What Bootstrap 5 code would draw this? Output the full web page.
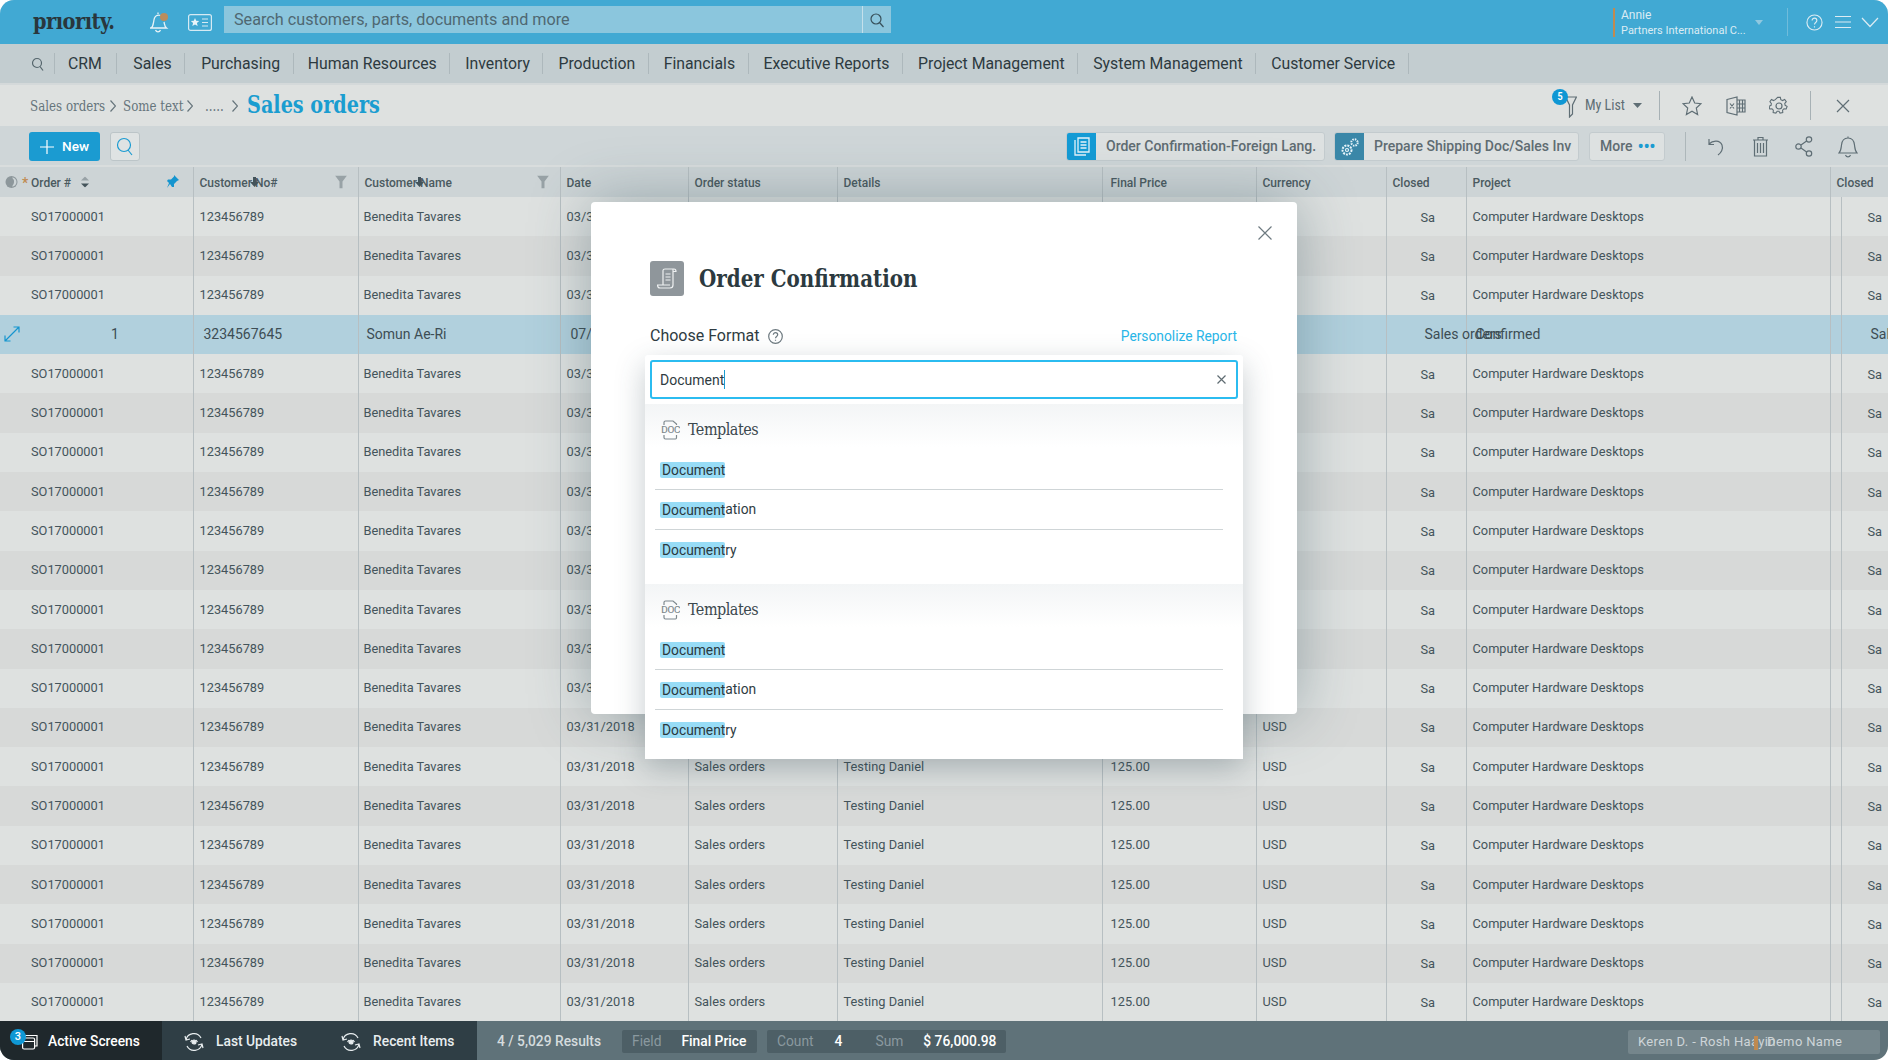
<!DOCTYPE html>
<html lang="en">
<head>
    <meta charset="UTF-8">
    <title>Sales orders - Priority</title>
    <meta name="viewport" content="width=device-width, initial-scale=1">
    <link href="https://cdn.jsdelivr.net/npm/bootstrap@5.3.3/dist/css/bootstrap.min.css" rel="stylesheet">
    <style>
        html, body { height: 100%; background: #fff; overflow: hidden; }
        body { font-family: Roboto, "Liberation Sans", sans-serif; color: #44545b; }
        svg { display: block; fill: none; stroke: currentColor; stroke-width: 1.2; flex: none; }
        .slab { font-family: "DejaVu Serif Condensed", "DejaVu Serif", serif; font-stretch: condensed; }
        .squeezed { display: inline-block; transform-origin: left center; white-space: nowrap; }
        .app-frame { position: relative; width: 1888px; height: 1060px; border-radius: 14px; overflow: hidden; display: flex; flex-direction: column; background: #dee1e0; }

        .top-bar { height: 44px; background: #41a9d3; color: #dcecf3; }
        .logo-text { margin-left: 33px; width: 116px; color: #29373d; font-size: 21.5px; font-weight: 700; letter-spacing: -.5px; line-height: 44px; }
        .bar-search { width: 667px; height: 27px; margin-left: 12px; margin-top: -5px; background: #8bc6dd; }
        .bar-search span { flex: 1; padding-left: 10px; font-size: 16.2px; line-height: 27px; color: #4f6872; }
        .bar-search div { width: 29px; height: 27px; border-left: 1px solid #c4e0eb; color: #38505a; }
        .user-box { height: 29px; border-left: 2px solid #c08a50; padding-left: 6px; width: 171px; line-height: 14px; }
        .user-box b { display: block; font-weight: 400; font-size: 12px; }
        .user-box small { font-size: 11px; white-space: nowrap; }
        .thin-sep { width: 1px; background: #6fbcdb; height: 28px; }

        .main-menu { height: 41px; background: #c3cdd0; border-bottom: 2px solid #d4d9da; padding: 0; color: #2d3a40; }
        .main-menu .menu-find { width: 55px; color: #56666d; }
        .menu-item { font-size: 15.8px; line-height: 21px; padding: 0 12.5px 0 15px; border-right: 1px solid #adb8bc; color: #2d3a40; text-decoration: none; white-space: nowrap; }
        .menu-find { border-right: 1px solid #adb8bc; height: 21px; }

        .crumb-band { height: 41px; background: #dee1e0; padding: 0 0 0 30px; }
        .crumb-link { color: #66757c; font-size: 14.5px; transform: scaleX(.91); }
        .crumb-arrow { color: #66757c; }
        .crumb-title { font-size: 24px; color: #1a9dd0; font-weight: 700; line-height: 41px; transform: scaleX(.89); margin-top: -3px; }
        .band-icons { color: #5f6e75; }
        .band-sep { width: 1px; height: 29px; background: #a7b1b5; }
        .count-dot { position: absolute; left: -13px; top: -5px; width: 16px; height: 16px; padding: 0; border-radius: 50%; background: #0f97d4; color: #fff; font-size: 11px; line-height: 16px; text-align: center; font-weight: 500; }

        .tool-band { height: 41px; background: #cfd6d8; border-bottom: 2px solid #d9dddd; padding: 2px 0 0 29px; }
        .btn-new { height: 29px; width: 71px; background: #1b9bd1; color: #fff; font-size: 13.6px; font-weight: 500; padding: 0; border: 0; border-radius: 3px; }
        .btn-find { height: 29px; width: 30px; margin-left: 10px; background: #dfe3e3; border: 1px solid #bcc5c8; border-radius: 3px; padding: 0; color: #1b9bd1; }
        .btn-doc { height: 29px; background: #dde1e1; border: 1px solid #c3cbce; border-radius: 3px; padding: 0; font-size: 14px; font-weight: 500; color: #5f6c72; white-space: nowrap; }
        .btn-doc .doc-square { width: 29px; height: 27px; background: #149bd5; color: #e6f4fa; border-radius: 2px 0 0 2px; margin-right: 10px; }
        .btn-doc .doc-square.muted-sq { background: #3a87a8; }
        .more-dots { color: #1b9bd1; font-size: 18px; letter-spacing: -.5px; line-height: 10px; }

        .grid-wrap { flex: 1; overflow: hidden; }
        .grid-tbl { width: 1888px; table-layout: fixed; margin: 0; color: #44545b; font-size: 12.8px; }
        .grid-tbl > thead > tr > th, .grid-tbl > tbody > tr > td { border: 0; border-left: 1px solid #b7bfc2; padding: 0 0 1px 6px; vertical-align: middle; white-space: nowrap; color: #44545b; }
        .grid-tbl > thead > tr > th:first-child, .grid-tbl > tbody > tr > td:first-child { border-left: 0; padding-left: 31px; }
        .grid-tbl > tbody > tr > td:nth-child(3) { padding-left: 5px; }
        .grid-tbl thead tr { height: 30px; --bs-table-bg: #cdd4d6; }
        .grid-tbl > thead > tr > th { font-size: 12px; font-weight: 500; position: relative; color: #4b5a60; padding-top: 2px; padding-bottom: 0; }
        .grid-tbl tbody tr { height: 39.3px; --bs-table-bg: #dee1e0; }
        .grid-tbl tbody tr:nth-child(even) { --bs-table-bg: #d7d9d8; }
        .grid-tbl > tbody > tr > td.col-price { padding-left: 8px; }
        .grid-tbl > tbody > tr > td.col-closed { padding-left: 34px; padding-top: 1px; padding-bottom: 0; }
        .grid-tbl > tbody > tr > td.col-last { padding-left: 26px; padding-top: 1px; padding-bottom: 0; }
        .grid-tbl > tbody > tr.row-picked > td { font-size: 14px; padding-left: 10px; padding-top: 0; --bs-table-bg: #b1d0dd; color: #3d4d54; }
        .grid-tbl > tbody > tr.row-picked > td:first-child { padding-left: 111px; position: relative; }
        .grid-tbl > tbody > tr.row-picked > td:nth-child(3) { padding-left: 8px; }
        .grid-tbl > tbody > tr.row-picked > td.col-closed { padding-left: 38px; }
        .grid-tbl > tbody > tr.row-picked > td.col-project { padding-left: 9px; }
        .grid-tbl > tbody > tr.row-picked > td.col-last { padding-left: 29px; }
        .head-mark { position: absolute; top: 50%; transform: translateY(-50%); }

        .status-bar { height: 39px; background: #5f7279; color: #d5dcde; font-size: 13.8px; font-weight: 500; }
        .status-active { width: 162px; background: #1f282c; color: #fff; position: relative; height: 100%; padding: 2px 0 0 22px; }
        .status-recent { width: 315px; background: #2f3e45; color: #e8edef; height: 100%; padding: 2px 0 0 22px; }
        .status-pill { height: 23px; background: #4d5f66; border-radius: 2px; padding: 0 10px; white-space: nowrap; margin-top: 2px; }
        .status-pill i { font-style: normal; color: #8a999f; font-weight: 400; }
        .status-pill b { font-weight: 500; color: #fff; }
        .status-user { position: relative; width: 252px; height: 24px; margin: 2px 8px 0 auto; background: #75868c; border-radius: 2px; font-size: 13px; font-weight: 400; color: #ced5d8; letter-spacing: .35px; padding-left: 10px; line-height: 24px; white-space: nowrap; }
        .status-user i { position: absolute; left: 126px; top: 6px; width: 4px; height: 14px; background: #c08a50; z-index: 1; }
        .status-user span { position: absolute; left: 139px; top: 0; }

        .dialog-box { position: absolute; left: 591px; top: 202px; width: 706px; height: 512px; border: 0; border-radius: 4px; background: #fff; box-shadow: 0 0 60px rgba(55, 85, 95, .4); display: block; }
        .dialog-close { position: absolute; right: 25px; top: 24px; color: #6e7a80; }
        .dialog-head { position: absolute; left: 59px; top: 58px; }
        .dialog-badge { width: 34px; height: 35px; background: #8f969b; border-radius: 3px; color: #eef0f1; }
        .dialog-title { font-size: 24px; font-weight: 700; color: #2c3a40; margin: 1px 0 0 15px; transform: scaleX(.92); }
        .format-line { position: absolute; left: 59px; right: 60px; top: 124px; height: 20px; }
        .format-line b { font-weight: 400; font-size: 16px; color: #2f3c42; }
        .format-line a { color: #29b6e8; font-size: 13.8px; text-decoration: none; }
        .format-help { color: #6e7a80; margin-left: 9px; }

        .picker-panel { position: absolute; left: 645px; top: 355px; width: 598px; height: 404px; background: #fff; border-radius: 3px; padding-top: 5px; box-shadow: 0 10px 30px rgba(45, 70, 80, .28); }
        .picker-input { position: relative; margin: 0 5px; }
        .picker-input .form-control { height: 39px; border: 2px solid #2bbcf0; border-radius: 3px; box-shadow: none; padding: 0 8px; font-size: 14px; color: #2f3c42; }
        .picker-caret { position: absolute; left: 74px; top: 10px; width: 1px; height: 19px; background: #1a9dd0; }
        .picker-clear { position: absolute; right: 12px; top: 15px; color: #5f6c72; }
        .picker-group { height: 180px; margin-top: 5px; background: linear-gradient(#f3f5f6, #fff 43px); }
        .picker-group + .picker-group { margin-top: 0; height: 175px; }
        .picker-title { height: 46px; padding: 5px 0 0 16px; font-size: 16px; letter-spacing: -.5px; color: #3b484e; }
        .picker-title svg { margin-right: 8px; color: #7d888d; }
        .picker-group .list-group-item { height: 40px; margin: 0 20px 0 10px; padding: 0 0 0 5px; border: 0; border-bottom: 1px solid #cfd5d7; border-radius: 0; background: transparent; font-size: 13.8px; color: #2f3c42; display: flex; align-items: center; }
        .picker-group .list-group-item:last-child { border-bottom: 0; }
        .hit-mark { background: #98dcf6; border-radius: 2px; padding-left: 2px; height: 16px; line-height: 16px; color: #2a383e; }
    </style>
</head>
<body>
    <div class="app-frame">

        <nav class="top-bar d-flex align-items-center">
            <div class="logo-text slab">prıorıty.</div>
            <svg width="24" height="22" viewBox="0 0 24 22" style="margin-left:-1px"><path d="M3 17c3-2 2-6 3.500-10 1-2.500 4-3.500 6-2.500M2 17h16.500c-2-1.500-2-4-2.500-6M7.500 19c1 2.500 4 2.500 5 0M10 3V1.500" stroke="#e6f2f7" stroke-width="1.300"/><circle cx="16" cy="6" r="4" fill="#b98d5c" stroke="none"/></svg>
            <svg class="ms-3" width="24" height="17" viewBox="0 0 24 17"><rect x=".6" y=".6" width="22.800" height="15.800" rx="2" stroke="#d6eaf3"/><path d="M7 4l1.200 2.800 3 .2-2.300 2 .8 3-2.700-1.600L4.300 12l.8-3-2.300-2 3-.2z" fill="#e8f4f9" stroke="none"/><path d="M14 5h6M14 8.500h6M14 12h6" stroke="#d6eaf3"/></svg>
            <div class="bar-search d-flex align-items-center">
                <span>Search customers, parts, documents and more</span>
                <div class="d-flex align-items-center justify-content-center"><svg width="16" height="16" viewBox="0 0 16 16"><circle cx="7" cy="7" r="5"/><path d="M10.500 10.500l4 4.500"/></svg></div>
            </div>
            <div class="user-box" style="margin-left:722px">
                <b>Annie</b>
                <small>Partners International C...</small>
            </div>
            <svg width="8" height="5" viewBox="0 0 8 5" class="me-3" style="margin-left:-29px"><path d="M0 0h8L4 5z" fill="#8fc8e0" stroke="none"/></svg>
            <div class="thin-sep" style="margin-left:8px"></div>
            <svg style="margin-left:17.500px" width="17" height="17" viewBox="0 0 18 18"><circle cx="9" cy="9" r="8"/><path d="M6.500 7c0-3.500 5-3.500 5 0 0 2-2.500 2-2.500 4M9 13v1.200"/></svg>
            <svg style="margin-left:12px" width="16" height="14" viewBox="0 0 16 14" stroke-width="1.500"><path d="M0 1.500h16M0 7h16M0 12.500h16"/></svg>
            <svg style="margin-left:10px" width="18" height="11" viewBox="0 0 18 11" stroke-width="1.500"><path d="M1 1l8 8.500L17 1"/></svg>
        </nav>

        <nav class="main-menu navbar navbar-expand justify-content-start flex-nowrap">
            <div class="menu-find d-flex align-items-center justify-content-end pe-2"><svg style="margin-right:2px" width="13" height="14" viewBox="0 0 13 14"><circle cx="6" cy="6" r="4.500"/><path d="M9 9.500l3 4"/></svg></div>
            <a class="menu-item" href="#" style="padding-left:13px;padding-right:14.500px">CRM</a>
            <a class="menu-item" href="#" style="padding-left:16px">Sales</a>
            <a class="menu-item" href="#" style="padding-left:16px">Purchasing</a>
            <a class="menu-item" href="#" style="padding-left:14px">Human Resources</a>
            <a class="menu-item" href="#">Inventory</a>
            <a class="menu-item" href="#">Production</a>
            <a class="menu-item" href="#">Financials</a>
            <a class="menu-item" href="#">Executive Reports</a>
            <a class="menu-item" href="#">Project Management</a>
            <a class="menu-item" href="#">System Management</a>
            <a class="menu-item" href="#">Customer Service</a>
        </nav>

        <div class="crumb-band d-flex align-items-center slab">
            <div style="width:80px"><span class="crumb-link squeezed">Sales orders</span></div>
            <svg class="crumb-arrow" width="6" height="12" viewBox="0 0 6 12"><path d="M.5.500l5 5.500-5 5.500"/></svg>
            <div style="width:64px;margin-left:7px"><span class="crumb-link squeezed">Some text</span></div>
            <svg class="crumb-arrow" width="6" height="12" viewBox="0 0 6 12"><path d="M.5.500l5 5.500-5 5.500"/></svg>
            <div style="width:27px;margin-left:12px"><span class="crumb-link squeezed">.....</span></div>
            <svg class="crumb-arrow" width="6" height="12" viewBox="0 0 6 12"><path d="M.5.500l5 5.500-5 5.500"/></svg>
            <div style="width:140px;margin-left:9px"><span class="crumb-title squeezed">Sales orders</span></div>
            <div class="band-icons ms-auto d-flex align-items-center" style="font-family:Roboto,sans-serif">
                <div class="position-relative me-2">
                    <span class="count-dot">5</span>
                    <svg width="12" height="24" viewBox="0 0 12 24"><path d="M.6 3h10.800L7.500 11v9l-3 3V11z"/></svg>
                </div>
                <span style="font-size:14px">My List</span>
                <svg class="ms-2" width="9" height="5" viewBox="0 0 9 5"><path d="M0 0h9L4.500 5z" fill="currentColor" stroke="none"/></svg>
                <div class="band-sep" style="margin-left:17px"></div>
                <svg style="margin-left:22px" width="20" height="20" viewBox="0 0 20 20"><path d="M10 1l2.700 6 6.300.7-4.700 4.300 1.300 6.500L10 15.200 4.400 18.500 5.700 12 1 7.700 7.300 7z"/></svg>
                <svg style="margin-left:24px" width="20" height="20" viewBox="0 0 20 20"><path d="M1 3.500L11 1v18L1 16.500zM11 4h8v12h-8M13.500 4v12M16.500 4v12M11 8h8M11 12h8M4 7.500l4 5M8 7.500l-4 5"/></svg>
                <svg style="margin-left:23px" width="20" height="20" viewBox="0 0 20 20"><path d="M8.500 1h3l.5 2.500 2 1 2.300-1.200 1.800 2.400-1.700 2 .4 2.100 2.200 1.200-1 2.900-2.500-.3-1.500 1.600.2 2.600-3 .7-1.200-2.200h-2L6.500 18.500l-3-.7.2-2.600-1.500-1.600-2.500.3L-1 11l2.200-1.200.3-2-1.600-2 1.700-2.500 2.300 1.200 2-1z" transform="translate(1 .5) scale(.9)"/><circle cx="10" cy="10" r="3"/></svg>
                <div class="band-sep" style="margin-left:21px"></div>
                <svg style="margin-left:25px" width="14" height="14" viewBox="0 0 14 14"><path d="M1 1l12 12M13 1L1 13"/></svg>
                <div style="width:38px"></div>
            </div>
        </div>

        <div class="tool-band d-flex align-items-center">
            <button type="button" class="btn btn-new d-flex align-items-center justify-content-center gap-2">
                <svg width="14" height="14" viewBox="0 0 14 14" stroke-width="1.300"><path d="M7 0v14M0 7h14"/></svg>New
            </button>
            <button type="button" class="btn btn-find d-flex align-items-center justify-content-center">
                <svg width="18" height="19" viewBox="0 0 18 19" stroke-width="2"><circle cx="8" cy="8" r="6.500"/><path d="M12 13l4 5"/></svg>
            </button>
            <button type="button" class="btn btn-doc d-flex align-items-center ms-auto" style="width:259px">
                <span class="doc-square d-flex align-items-center justify-content-center"><svg width="16" height="19" viewBox="0 0 16 19"><path d="M1 3v15h11M4 1h11v14H4zM6.500 5h6M6.500 8h6M6.500 11h6" stroke-width="1.300"/></svg></span>Order Confirmation-Foreign Lang.
            </button>
            <button type="button" class="btn btn-doc d-flex align-items-center" style="width:245px;margin-left:9px">
                <span class="doc-square muted-sq d-flex align-items-center justify-content-center"><svg width="20" height="20" viewBox="0 0 20 20"><circle cx="7" cy="13" r="4.500" stroke-dasharray="2 1" stroke-width="2"/><circle cx="7" cy="13" r="1.500"/><circle cx="14.500" cy="5.500" r="3.200" stroke-dasharray="1.500 1" stroke-width="2"/></svg></span>Prepare Shipping Doc/Sales Inv
            </button>
            <button type="button" class="btn btn-doc d-flex align-items-center justify-content-between" style="width:76px;margin-left:10px;padding:0 9px 0 10px">
                More <span class="more-dots">•••</span>
            </button>
            <div class="band-sep" style="margin-left:20px;background:#adb7ba"></div>
            <div class="d-flex align-items-center band-icons">
                <svg style="margin-left:22px" width="18" height="20" viewBox="0 0 18 20"><path d="M1 7c4-4 11-4 13 1 1.500 4-1 8-4 10M1 2v5.500h5"/></svg>
                <svg style="margin-left:26px" width="17" height="21" viewBox="0 0 17 21"><path d="M1 4h15M6 4V1.500h5V4M2.500 4v16h12V4M5.500 7v10M8.500 7v10M11.500 7v10"/></svg>
                <svg style="margin-left:26px" width="18" height="21" viewBox="0 0 18 21"><circle cx="3.500" cy="10.500" r="2.700"/><circle cx="14" cy="3.500" r="2.700"/><circle cx="14" cy="17.500" r="2.700"/><path d="M6 9l5.600-4M6 12l5.600 4"/></svg>
                <svg style="margin-left:25px" width="20" height="22" viewBox="0 0 20 22"><path d="M1 17c2-2 2-4 2.500-8C4 4 7 2 10 2s6 2 6.500 7c.5 4 .5 6 2.500 8zM10 2V.5M7.500 19c1 2.500 4 2.500 5 0"/></svg>
                <div style="width:30px"></div>
            </div>
        </div>

        <div class="grid-wrap">
            <table class="table grid-tbl">
                <colgroup>
                    <col style="width:193px"><col style="width:165px"><col style="width:202px"><col style="width:128px"><col style="width:149px"><col style="width:265px"><col style="width:154px"><col style="width:130px"><col style="width:80px"><col style="width:364px"><col style="width:11px"><col style="width:47px">
                </colgroup>
                <thead>
                    <tr>
                        <th>
                            <svg class="head-mark" style="left:5px" width="13" height="13" viewBox="0 0 13 13"><circle cx="6.500" cy="6.500" r="6" fill="#8d979b" stroke="none"/><path d="M7 2a4.500 4.500 0 0 1 0 9 6 6 0 0 0 0-9z" fill="#cdd4d6" stroke="none"/></svg>
                            <span class="head-mark" style="left:22px;top:16px;color:#c08a50;font-size:14px">*</span>
                            Order #
                            <svg class="head-mark" style="left:81px" width="8" height="11" viewBox="0 0 8 11"><path d="M0 4l4-4 4 4z" fill="#98a2a6" stroke="none"/><path d="M0 7h8l-4 4z" fill="#44545b" stroke="none"/></svg>
                            <svg class="head-mark" style="left:166px;color:#1595cf" width="13" height="14" viewBox="0 0 13 14"><path d="M8 0l5 5-2 1-3 3 0 3-2 0-2-3-3 4 2-5-2-2 1-1.500 3 0 3-3z" fill="currentColor" stroke="none"/></svg>
                        </th>
                        <th>Customer No#
                            <svg class="head-mark" style="left:56px" width="9" height="10" viewBox="0 0 9 10"><path d="M0 5l4.500 5L9 5H6V0H3v5z" fill="#44545b" stroke="none"/></svg>
                            <svg class="head-mark" style="left:141px;top:15px" width="12" height="13" viewBox="0 0 12 13"><path d="M0 0h12L7.500 6v7h-3V6z" fill="#98a2a6" stroke="none"/></svg>
                        </th>
                        <th>Customer Name
                            <svg class="head-mark" style="left:56px" width="9" height="10" viewBox="0 0 9 10"><path d="M0 5l4.500 5L9 5H6V0H3v5z" fill="#44545b" stroke="none"/></svg>
                            <svg class="head-mark" style="left:178px;top:15px" width="12" height="13" viewBox="0 0 12 13"><path d="M0 0h12L7.500 6v7h-3V6z" fill="#98a2a6" stroke="none"/></svg>
                        </th>
                        <th>Date</th>
                        <th>Order status</th>
                        <th>Details</th>
                        <th style="padding-left:8px">Final Price</th>
                        <th>Currency</th>
                        <th>Closed</th>
                        <th>Project</th>
                        <th colspan="2">Closed</th>
                    </tr>
                </thead>
                <tbody id="orderRows"></tbody>
            </table>
        </div>

        <footer class="status-bar d-flex align-items-center">
            <div class="status-active d-flex align-items-center">
                <span class="count-dot" style="left:10px;top:8px;z-index:1">3</span>
                <svg width="16" height="16" viewBox="0 0 16 16"><rect x=".6" y="4" width="12" height="11" rx="1.500"/><path d="M3 4V1.500h12V12h-2M.6 7.500h12"/></svg>
                <span style="margin-left:10px">Active Screens</span>
            </div>
            <div class="status-recent d-flex align-items-center">
                <svg width="20" height="20" viewBox="0 0 20 20"><path d="M2 8a8 8 0 0 1 15-2M18 12a8 8 0 0 1-15 2M1 4l1 4 4-1M19 16l-1-4-4 1"/><circle cx="10" cy="10" r="2" fill="currentColor"/><path d="M6.500 10l1.500-2M13.500 10L12 8"/></svg>
                <span style="margin-left:12px">Last Updates</span>
                <svg style="margin-left:44px" width="20" height="20" viewBox="0 0 20 20"><path d="M2 8a8 8 0 0 1 15-2M18 12a8 8 0 0 1-15 2M1 4l1 4 4-1M19 16l-1-4-4 1"/><circle cx="10" cy="10" r="2" fill="currentColor"/><path d="M6.500 10l1.500-2M13.500 10L12 8"/></svg>
                <span style="margin-left:12px">Recent Items</span>
            </div>
            <span style="margin:2px 0 0 20px;width:125px;white-space:nowrap">4 / 5,029 Results</span>
            <div class="status-pill d-flex align-items-center" style="width:135px"><i>Field</i><b style="margin-left:20px">Final Price</b></div>
            <div class="status-pill d-flex align-items-center" style="width:239px;margin-left:10px">
                <i>Count</i><b style="margin-left:21px">4</b>
                <span style="width:1px;height:16px;background:#5f7279;margin-left:19px"></span>
                <i style="margin-left:14px">Sum</i><b style="margin-left:20px">$ 76,000.98</b>
            </div>
            <div class="status-user">Keren D. - Rosh Haayin<i></i><span>Demo Name</span></div>
        </footer>

        <div class="modal-content dialog-box">
            <svg class="dialog-close" width="14" height="14" viewBox="0 0 14 14"><path d="M.5.500l13 13M13.500.500l-13 13"/></svg>
            <div class="dialog-head d-flex align-items-center">
                <div class="dialog-badge d-flex align-items-center justify-content-center">
                    <svg width="20" height="22" viewBox="0 0 20 22"><path d="M6 17V2.500C6 1.500 7 1 8 1h9c1 0 2 1 2 2.500h-3M16 1.500V17c0 2-1 3-3 3H3c-1.500 0-2.500-1-2.500-3H13M8.500 6h5M8.500 9h5M8.500 12h5"/></svg>
                </div>
                <div class="dialog-title slab squeezed">Order Confirmation</div>
            </div>
            <div class="format-line d-flex align-items-center">
                <b>Choose Format</b>
                <svg class="format-help" width="15" height="15" viewBox="0 0 15 15"><circle cx="7.500" cy="7.500" r="6.800"/><path d="M5.300 5.800c0-2.800 4.400-2.800 4.400 0 0 1.700-2.200 1.700-2.200 3.500M7.500 10.700v1"/></svg>
                <a class="ms-auto" href="#">Personolize Report</a>
            </div>
        </div>

        <div class="picker-panel">
            <div class="picker-input">
                <input type="text" class="form-control" value="Document">
                <span class="picker-caret"></span>
                <svg class="picker-clear" width="9" height="9" viewBox="0 0 9 9"><path d="M.5.500l8 8M8.500.500l-8 8"/></svg>
            </div>
            <div class="picker-group">
                <div class="picker-title d-flex align-items-center slab">
                    <svg width="19" height="20" viewBox="0 0 19 20"><path d="M3 5V2.500Q3 1 4.500 1H12l3.500 3v1M3 15v2.500Q3 19 4.500 19h10q1 0 1-1.500V15"/><text x="9.500" y="13" text-anchor="middle" textLength="19" lengthAdjust="spacingAndGlyphs" font-family="Roboto, sans-serif" font-size="8.500" fill="currentColor" stroke="none">DOC</text></svg>
                    Templates
                </div>
                <div class="list-group">
                    <div class="list-group-item"><span class="hit-mark">Document</span></div>
                    <div class="list-group-item"><span class="hit-mark">Document</span>ation</div>
                    <div class="list-group-item"><span class="hit-mark">Document</span>ry</div>
                </div>
            </div>
            <div class="picker-group">
                <div class="picker-title d-flex align-items-center slab">
                    <svg width="19" height="20" viewBox="0 0 19 20"><path d="M3 5V2.500Q3 1 4.500 1H12l3.500 3v1M3 15v2.500Q3 19 4.500 19h10q1 0 1-1.500V15"/><text x="9.500" y="13" text-anchor="middle" textLength="19" lengthAdjust="spacingAndGlyphs" font-family="Roboto, sans-serif" font-size="8.500" fill="currentColor" stroke="none">DOC</text></svg>
                    Templates
                </div>
                <div class="list-group">
                    <div class="list-group-item"><span class="hit-mark">Document</span></div>
                    <div class="list-group-item"><span class="hit-mark">Document</span>ation</div>
                    <div class="list-group-item"><span class="hit-mark">Document</span>ry</div>
                </div>
            </div>
        </div>
    </div>

    <script>
        // 21 rows, the 4th one is the selected line. Rows behind the dialog only show what sticks out of it.
        const normalRow = ['SO17000001', '123456789', 'Benedita Tavares', '03/31/2018', 'Sales orders', 'Testing Daniel', '125.00', 'USD', 'Sa', 'Computer Hardware Desktops', '', 'Sa'];
        const pickedRow = ['1', '3234567645', 'Somun Ae-Ri', '07/', '', '', '', '', 'Sales orders', 'Confirmed', '', 'Sal'];
        const cellClass = { 6: 'col-price', 8: 'col-closed', 9: 'col-project', 11: 'col-last' };

        function rowValues(i) {
            if (i === 3) return pickedRow;
            const row = normalRow.slice();
            if (i < 13) {
                row[3] = '03/3';
                row[4] = row[5] = row[6] = row[7] = '';
            } else if (i === 13) {
                row[4] = row[5] = row[6] = '';
            }
            return row;
        }

        let html = '';
        for (let i = 0; i < 21; i++) {
            const cells = rowValues(i).map((text, n) => {
                const extra = i === 3 && n === 0
                    ? '<svg class="position-absolute" style="left:4px;top:11px;color:#1595cf" width="16" height="16" viewBox="0 0 16 16" stroke-width="1.600"><path d="M1 15L15 1M9.500 1H15v5.500M1 9.500V15h5.500"/></svg>'
                    : '';
                return `<td class="${cellClass[n] || ''}">${extra}${text}</td>`;
            }).join('');
            html += `<tr class="${i === 3 ? 'row-picked' : ''}">${cells}</tr>`;
        }
        document.getElementById('orderRows').innerHTML = html;
    </script>
    <script src="https://cdn.jsdelivr.net/npm/bootstrap@5.3.3/dist/js/bootstrap.bundle.min.js"></script>
</body>
</html>
